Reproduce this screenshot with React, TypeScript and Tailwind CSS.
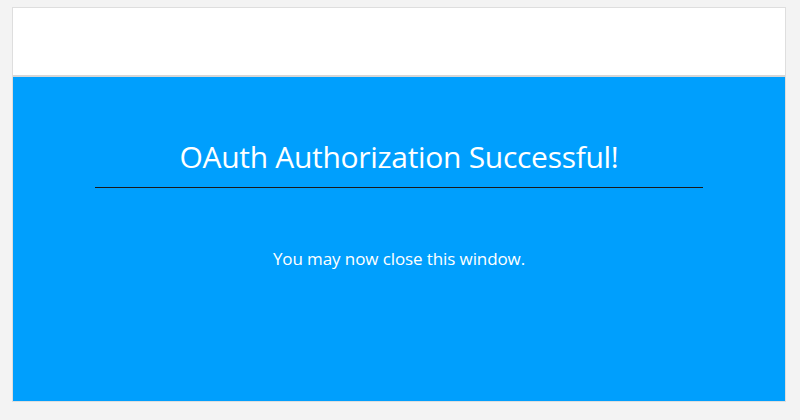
export default function App() {
  return (
    <div className="w-[800px] h-[420px] bg-[#f3f3f3] pt-[7px] pl-[12px]" style={{ fontFamily: '"Open Sans", "Noto Sans", sans-serif' }}>
      <div className="w-[774px] h-[395px] border border-[#dedede] flex flex-col bg-white">
        <div className="h-[69px] bg-white border-b-2 border-[#d6d6d6] shrink-0" />
        <div className="flex-1 bg-[#009ffd] flex flex-col items-center">
          <h1 className="mt-[61px] text-[30px] leading-[38px] text-white tracking-[-0.3px]">OAuth Authorization Successful!</h1>
          <div className="mt-[11px] w-[608px] h-px bg-[#1a1a1a]" />
          <p className="mt-[59px] text-[17px] leading-[24px] text-white tracking-[-0.1px]">You may now close this window.</p>
        </div>
      </div>
    </div>
  );
}
